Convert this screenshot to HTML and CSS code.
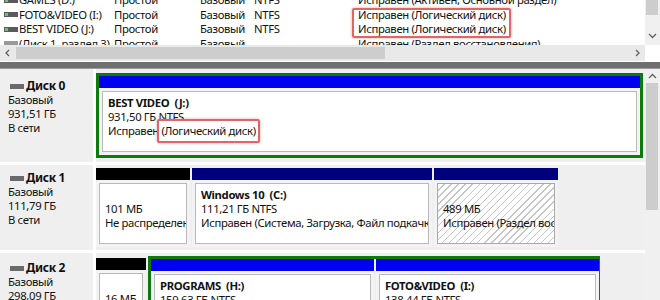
FILE: index.html
```html
<!DOCTYPE html>
<html lang="ru">
<head>
  <meta charset="UTF-8" />
  <title>Управление дисками</title>
  <link rel="stylesheet" href="styles.css">
</head>
<body>
  <!-- VOLUME LIST -->
  <div class="top">
    <div class="list">
      <div class="rows">
        <div class="row">
          <span class="c-name"><svg class="ico" width="14" height="5"><rect x="0" y="0" width="14" height="5" fill="#5a5a5a"/><rect x="1" y="1" width="3" height="3" fill="#6fbf6f"/></svg>GAMES (D:)</span>
          <span class="c-layout">Простой</span><span class="c-type">Базовый</span><span class="c-fs">NTFS</span>
          <span class="c-status">Исправен (Активен, Основной раздел)</span>
        </div>
        <div class="row">
          <span class="c-name"><svg class="ico" width="14" height="5"><rect x="0" y="0" width="14" height="5" fill="#5a5a5a"/><rect x="1" y="1" width="3" height="3" fill="#6fbf6f"/></svg>FOTO&amp;VIDEO (I:)</span>
          <span class="c-layout">Простой</span><span class="c-type">Базовый</span><span class="c-fs">NTFS</span>
          <span class="c-status">Исправен (Логический диск)</span>
        </div>
        <div class="row">
          <span class="c-name"><svg class="ico" width="14" height="5"><rect x="0" y="0" width="14" height="5" fill="#5a5a5a"/><rect x="1" y="1" width="3" height="3" fill="#6fbf6f"/></svg>BEST VIDEO (J:)</span>
          <span class="c-layout">Простой</span><span class="c-type">Базовый</span><span class="c-fs">NTFS</span>
          <span class="c-status">Исправен (Логический диск)</span>
        </div>
        <div class="row">
          <span class="c-name"><svg class="ico" width="14" height="5"><rect x="0" y="0" width="14" height="5" fill="#9a9a9a"/></svg>(Диск 1, раздел 3)</span>
          <span class="c-layout">Простой</span><span class="c-type">Базовый</span><span class="c-fs"></span>
          <span class="c-status">Исправен (Раздел восстановления)</span>
        </div>
        <div class="mark-box"></div>
      </div>
      <div class="hscroll">
        <svg class="arr" width="16" height="16"><polyline points="9,5 6,8 9,11" fill="none" stroke="#606060" stroke-width="1.3"/></svg>
        <div class="htrack"><div class="hthumb"></div></div>
        <svg class="arr" width="16" height="16"><polyline points="7,5 10,8 7,11" fill="none" stroke="#606060" stroke-width="1.3"/></svg>
      </div>
    </div>
    <div class="vscroll">
      <div class="vthumb top-thumb"></div>
      <svg class="varr" width="15" height="14"><polyline points="4,5 7.5,8.5 11,5" fill="none" stroke="#606060" stroke-width="1.3"/></svg>
      <div class="corner"></div>
    </div>
  </div>

  <div class="splitter"></div>

  <!-- DISK MAP -->
  <div class="bottom">
    <div class="disks">
      <div class="disk d0">
        <div class="label">
          <b><svg class="ico" width="14" height="5"><rect x="0" y="0" width="14" height="5" fill="#6a6a6a"/></svg>Диск 0</b>
          <span>Базовый</span><span>931,51 ГБ</span><span>В сети</span>
        </div>
        <div class="map">
          <div class="ext" style="width: 547px;">
            <div class="part logical" style="width: 541px;">
              <div class="head"></div>
              <div class="body">
                <b>BEST VIDEO&nbsp; (J:)</b>
                <span>931,50 ГБ NTFS</span>
                <span>Исправен <em class="mark">(Логический диск)</em></span>
              </div>
            </div>
          </div>
        </div>
      </div>

      <div class="disk d1">
        <div class="label">
          <b><svg class="ico" width="14" height="5"><rect x="0" y="0" width="14" height="5" fill="#6a6a6a"/></svg>Диск 1</b>
          <span>Базовый</span><span>111,79 ГБ</span><span>В сети</span>
        </div>
        <div class="map">
          <div class="part free" style="width: 94px;">
            <div class="head"></div>
            <div class="body skip">
              <span>101 МБ</span>
              <span>Не распределена</span>
            </div>
          </div>
          <div class="part primary" style="width: 240px;">
            <div class="head"></div>
            <div class="body">
              <b>Windows 10&nbsp; (C:)</b>
              <span>111,21 ГБ NTFS</span>
              <span>Исправен (Система, Загрузка, Файл подкачки, Активен)</span>
            </div>
          </div>
          <div class="part primary" style="width: 124px;">
            <div class="head"></div>
            <div class="body skip hatch">
              <span>489 МБ</span>
              <span>Исправен (Раздел восстановления)</span>
            </div>
          </div>
        </div>
      </div>

      <div class="disk d2">
        <div class="label">
          <b><svg class="ico" width="14" height="5"><rect x="0" y="0" width="14" height="5" fill="#6a6a6a"/></svg>Диск 2</b>
          <span>Базовый</span><span>298,09 ГБ</span><span>В сети</span>
        </div>
        <div class="map">
          <div class="part free inset" style="width: 50px;">
            <div class="head"></div>
            <div class="body skip">
              <span>16 МБ</span>
              <span>Не распределена</span>
            </div>
          </div>
          <div class="ext" style="width: 452px;">
            <div class="part logical" style="width: 223px;">
              <div class="head"></div>
              <div class="body">
                <b>PROGRAMS&nbsp; (H:)</b>
                <span>159,63 ГБ NTFS</span>
                <span>Исправен (Логический диск)</span>
              </div>
            </div>
            <div class="part logical" style="width: 223px;">
              <div class="head"></div>
              <div class="body">
                <b>FOTO&amp;VIDEO&nbsp; (I:)</b>
                <span>138,44 ГБ NTFS</span>
                <span>Исправен (Логический диск)</span>
              </div>
            </div>
          </div>
        </div>
      </div>
    </div>
    <div class="vscroll low">
      <svg class="varr" width="15" height="14"><polyline points="4,9 7.5,5.5 11,9" fill="none" stroke="#606060" stroke-width="1.3"/></svg>
      <div class="vthumb low-thumb"></div>
    </div>
  </div>
</body>
</html>
```

FILE: styles.css
```css
* {
  box-sizing: border-box;
}
body {
  margin: 0;
  width: 660px;
  height: 300px;
  overflow: hidden;
  font-family: "Noto Sans", "Open Sans", sans-serif;
  font-size: 11.3px;
  letter-spacing: -0.35px;
  color: #111;
  background: #fff;
}
b, em {
  font-style: normal;
}

/* --- volume list --- */
.top {
  display: flex;
  height: 62px;
  overflow: hidden;
}
.list {
  flex: 1;
  display: flex;
  flex-direction: column;
}
.rows {
  position: relative;
  height: 45px;
  overflow: hidden;
}
.row {
  display: flex;
  height: 14.5px;
  line-height: 14.5px;
  white-space: nowrap;
}
.row:first-child {
  margin-top: -7px;
}
.c-name {
  width: 114px;
  padding-left: 4px;
  display: flex;
  align-items: center;
  overflow: hidden;
}
.ico {
  flex: none;
  margin-right: 1px;
}
.c-layout { width: 86px; }
.c-type { width: 54px; }
.c-fs { width: 104px; }
.c-status { flex: 1; }
.mark-box {
  position: absolute;
  left: 352px;
  top: 8px;
  width: 159px;
  height: 30px;
  border: 2px solid #e46363;
  border-radius: 2px;
  box-shadow: 0 0 3px rgba(120, 0, 0, 0.35);
}
.hscroll {
  display: flex;
  height: 16px;
  background: #e9e9e9;
}
.arr {
  flex: none;
}
.htrack {
  flex: 1;
  padding: 2px 0;
}
.hthumb {
  width: 369px;
  height: 12px;
  background: #cdcdcd;
}
.vscroll {
  width: 15px;
  background: #f0f0f0;
  display: flex;
  flex-direction: column;
}
.vthumb {
  margin: 0 2px 0 1px;
  background: #cdcdcd;
}
.top-thumb {
  height: 15px;
}
.varr {
  margin-top: 14px;
}
.corner {
  margin-top: 2px;
  flex: 1;
  background: #fff;
}
.splitter {
  height: 7px;
  background: #6f6f6f;
  border-bottom: 1px solid #9a9a9a;
}

/* --- disk map --- */
.bottom {
  display: flex;
  height: 231px;
}
.disks {
  flex: 1;
  display: flex;
  flex-direction: column;
  gap: 3px;
  background: #fff;
}
.disk {
  display: flex;
  flex: none;
}
.label {
  width: 93px;
  margin-right: 3px;
  padding: 9px 0 0 8px;
  background: #efefef;
  display: flex;
  flex-direction: column;
  line-height: 14px;
}
.label b {
  display: flex;
  align-items: center;
  font-weight: 700;
  font-size: 12px;
  margin-left: 2px;
}
.label .ico {
  margin-right: 2px;
}
.d0 .label { padding-top: 10px; }
.d1 .label { padding-top: 6px; }
.d2 .label { padding-top: 8px; }
.map {
  flex: 1;
  display: flex;
  gap: 2px;
  padding: 3px 0;
  background: #efefef;
}
.d0 .map {
  padding: 4px 0;
}
.ext {
  display: flex;
  gap: 2px;
  height: 85px;
  border: 3px solid #0c7a0c;
  background: #efefef;
}
.part {
  flex: none;
  height: 79px;
  display: flex;
  flex-direction: column;
  background: #f3f3f3;
}
.part.inset {
  margin-top: 2px;
}
.head {
  height: 12px;
  background: #00007c;
}
.logical .head { background: #0000f0; }
.free .head { background: #000; }
.body {
  flex: 1;
  margin: 3px 3px 3px 3px;
  padding: 4px 0 0 5px;
  border: 1px solid #b9b9b9;
  background: #fff;
  display: flex;
  flex-direction: column;
  line-height: 14px;
  white-space: nowrap;
  overflow: hidden;
}
.body b {
  font-weight: 700;
}
.body.skip {
  padding-top: 18px;
}
.hatch {
  background: repeating-linear-gradient(135deg, #fff 0 4px, #c4c4c4 4px 5px);
  border-color: #a9a9a9;
}
.mark {
  position: relative;
}
.mark::after {
  content: "";
  position: absolute;
  left: -4px;
  right: -4px;
  top: -4px;
  bottom: -5px;
  border: 2px solid #e46363;
  border-radius: 2px;
  box-shadow: 0 0 3px rgba(120, 0, 0, 0.35);
}
.vscroll.low .varr {
  margin-top: 0;
}
.low-thumb {
  margin-top: 0;
  height: 127px;
}
```
